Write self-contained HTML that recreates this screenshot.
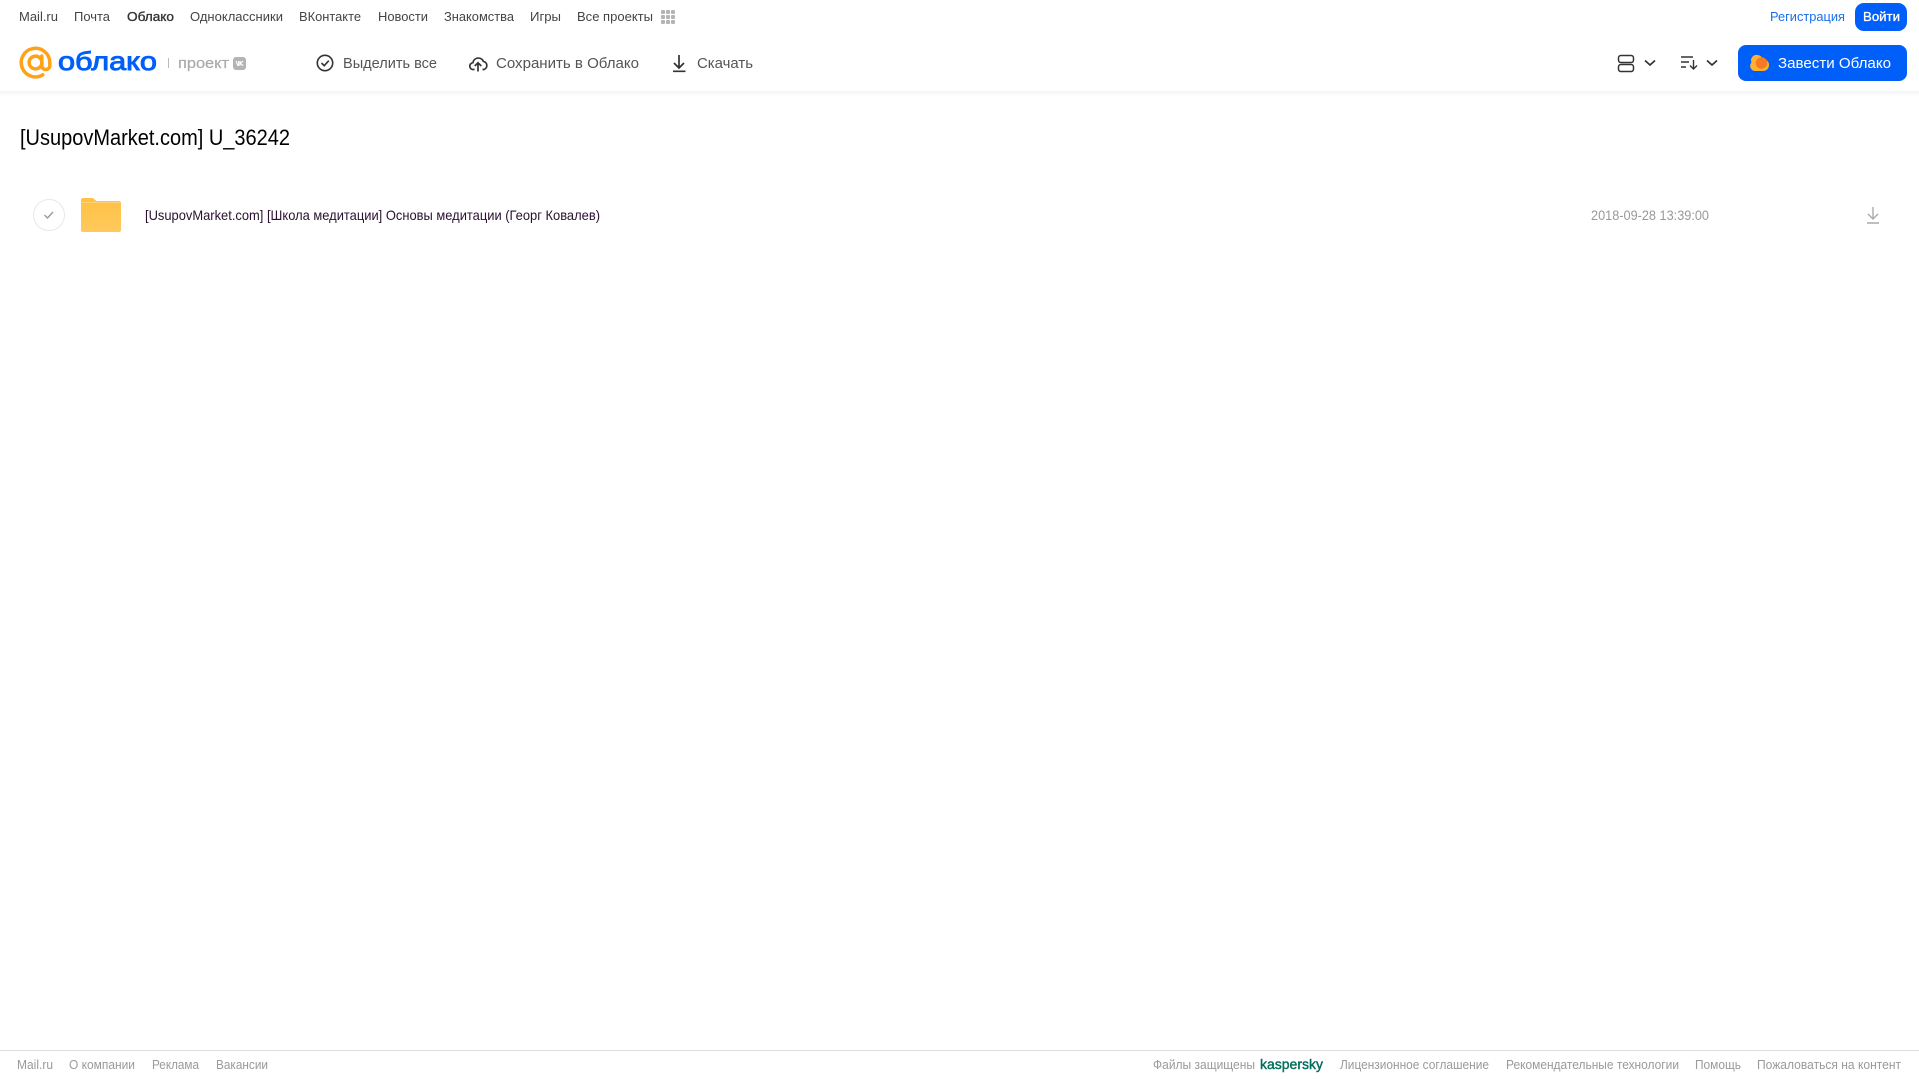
<!DOCTYPE html>
<html lang="ru">
<head>
<meta charset="utf-8">
<title>[UsupovMarket.com] U_36242</title>
<style>
html,body{margin:0;padding:0;background:#fff;width:1919px;height:1079px;overflow:hidden}
svg{display:block}
text{font-family:"Liberation Sans",sans-serif}
</style>
</head>
<body>
<svg xmlns="http://www.w3.org/2000/svg" width="1919" height="1079" viewBox="0 0 1919 1079">
<defs>
<linearGradient id="sh" x1="0" y1="0" x2="0" y2="1"><stop offset="0" stop-color="#f3f3f3"/><stop offset="1" stop-color="#fff"/></linearGradient>
<linearGradient id="fo" x1="0" y1="0" x2="0" y2="1"><stop offset="0" stop-color="#ffc145"/><stop offset="1" stop-color="#ffc95c"/></linearGradient>
</defs>
<rect width="1919" height="1079" fill="#fff"/>
<rect x="0" y="91" width="1919" height="5" fill="url(#sh)"/>

<!-- top nav -->
<g font-size="13" fill="#444">
<text x="19" y="21" textLength="39" lengthAdjust="spacingAndGlyphs">Mail.ru</text>
<text x="74" y="21" textLength="36" lengthAdjust="spacingAndGlyphs">Почта</text>
<text x="127" y="21" textLength="47" lengthAdjust="spacingAndGlyphs" fill="#333" stroke="#333" stroke-width=".35">Облако</text>
<text x="190" y="21" textLength="93" lengthAdjust="spacingAndGlyphs">Одноклассники</text>
<text x="299" y="21" textLength="62" lengthAdjust="spacingAndGlyphs">ВКонтакте</text>
<text x="378" y="21" textLength="50" lengthAdjust="spacingAndGlyphs">Новости</text>
<text x="444" y="21" textLength="70" lengthAdjust="spacingAndGlyphs">Знакомства</text>
<text x="530" y="21" textLength="31" lengthAdjust="spacingAndGlyphs">Игры</text>
<text x="577" y="21" textLength="76" lengthAdjust="spacingAndGlyphs">Все проекты</text>
</g>
<g fill="#b4b4b4">
<rect x="661" y="10" width="4" height="4" rx="1"/><rect x="666" y="10" width="4" height="4" rx="1"/><rect x="671" y="10" width="4" height="4" rx="1"/>
<rect x="661" y="15" width="4" height="4" rx="1"/><rect x="666" y="15" width="4" height="4" rx="1"/><rect x="671" y="15" width="4" height="4" rx="1"/>
<rect x="661" y="20" width="4" height="4" rx="1"/><rect x="666" y="20" width="4" height="4" rx="1"/><rect x="671" y="20" width="4" height="4" rx="1"/>
</g>
<text x="1770" y="21" font-size="13" fill="#1a6fe8" textLength="75" lengthAdjust="spacingAndGlyphs">Регистрация</text>
<rect x="1855" y="3" width="52" height="28" rx="9" fill="#005ff9"/>
<text x="1863" y="21" font-size="13" fill="#fff" stroke="#fff" stroke-width=".3" textLength="37" lengthAdjust="spacingAndGlyphs">Войти</text>

<!-- logo -->
<circle cx="35.500" cy="62.500" r="6.400" fill="none" stroke="#ffa217" stroke-width="3.500"/>
<path d="M41.800 56 V65.500 a4 4 0 0 0 8 0 V62.500 a14.300 14.300 0 1 0 -7 12.400" fill="none" stroke="#ffa217" stroke-width="3.500" stroke-linecap="round"/>
<text x="58" y="70" font-size="26" fill="#005ff9" stroke="#005ff9" stroke-width=".9" textLength="99" lengthAdjust="spacingAndGlyphs">облако</text>
<rect x="168" y="58" width="1" height="10" fill="#bbb"/>
<text x="178" y="68" font-size="15" fill="#aaa" stroke="#aaa" stroke-width=".2" textLength="51" lengthAdjust="spacingAndGlyphs">проект</text>
<rect x="233" y="57" width="13" height="13" rx="3" fill="#b4b4b4"/>
<path d="M236 61 l1.800 4.500 h.8 v-4.500 M243 61 l-2.600 2.200 2.800 2.600 M240 61 v4.500" fill="none" stroke="#fff" stroke-width="1.100"/>

<!-- toolbar -->
<circle cx="325" cy="63" r="7.700" fill="none" stroke="#333" stroke-width="1.600"/>
<path d="M321.500 63 l2.700 2.700 4.600-5" fill="none" stroke="#333" stroke-width="1.600"/>
<g font-size="15" fill="#555">
<text x="343" y="68" textLength="94" lengthAdjust="spacingAndGlyphs">Выделить все</text>
<text x="496" y="68" textLength="143" lengthAdjust="spacingAndGlyphs">Сохранить в Облако</text>
<text x="697" y="68" textLength="56" lengthAdjust="spacingAndGlyphs">Скачать</text>
</g>
<path d="M474.500 69.500 h-1 a3.400 3.400 0 0 1 -.6-6.800 a5.500 5.500 0 0 1 10.500-1.300 a4.200 4.200 0 0 1 .6 8.100 h-1.500 M478 71.500 V63 M474.700 66 L478 62.800 L481.300 66" fill="none" stroke="#333" stroke-width="1.700"/>
<path d="M679 55 V68 M674 63 L679 68 L684 63 M673 71.300 H685.500" fill="none" stroke="#333" stroke-width="1.700"/>

<!-- right controls -->
<rect x="1618.500" y="55.500" width="15" height="7" rx="2.400" fill="none" stroke="#333" stroke-width="1.500"/>
<rect x="1618.500" y="64.500" width="15" height="7" rx="2.400" fill="none" stroke="#333" stroke-width="1.500"/>
<path d="M1645 60.500 L1650 65 L1655 60.500" fill="none" stroke="#333" stroke-width="1.700"/>
<path d="M1681 57 H1693 M1681 62 H1689 M1681 67 H1686 M1693.500 60 V69 M1690 65.500 L1693.500 69 L1697 65.500" fill="none" stroke="#333" stroke-width="1.400"/>
<path d="M1707 60.500 L1712 65 L1717 60.500" fill="none" stroke="#333" stroke-width="1.700"/>
<rect x="1738" y="45" width="169" height="36" rx="8" fill="#005ff9"/>
<path d="M1755 71 a5 5 0 0 1 -3.500 -8.400 a5.500 5.500 0 0 1 6 -7.600 a5.500 5.500 0 0 1 5 4 a6 6 0 0 1 1 12 z" fill="#ffb12e"/>
<circle cx="1761.500" cy="63" r="5.800" fill="#f57a22"/>
<text x="1778" y="68" font-size="15" fill="#fff" textLength="113" lengthAdjust="spacingAndGlyphs">Завести Облако</text>

<!-- title -->
<text x="20" y="145" font-size="22" fill="#000" textLength="270" lengthAdjust="spacingAndGlyphs">[UsupovMarket.com] U_36242</text>

<!-- row -->
<circle cx="49" cy="215" r="15.500" fill="#fff" stroke="#e8e8e8" stroke-width="1"/>
<path d="M44.500 215 l3 3 5.500-6" fill="none" stroke="#999" stroke-width="1.400"/>
<path d="M81 200 a2 2 0 0 1 2-2 h9 c2.500 0 3 3 5 3 h22 a2 2 0 0 1 2 2 v27 a2 2 0 0 1-2 2 h-36 a2 2 0 0 1-2-2 z" fill="url(#fo)"/>
<rect x="81" y="202" width="40" height="1" fill="#ffd27a"/>
<text x="145" y="220" font-size="14" fill="#2a1030" textLength="455" lengthAdjust="spacingAndGlyphs">[UsupovMarket.com] [Школа медитации] Основы медитации (Георг Ковалев)</text>
<text x="1591" y="220" font-size="14" fill="#999" textLength="118" lengthAdjust="spacingAndGlyphs">2018-09-28 13:39:00</text>
<path d="M1873 207 V219 M1868 214 L1873 219 L1878 214 M1867 223 H1879" fill="none" stroke="#aaa" stroke-width="1.400"/>

<!-- footer -->
<rect x="0" y="1050" width="1919" height="1" fill="#ddd"/>
<g font-size="13" fill="#9a9a9a">
<text x="17" y="1069" textLength="36" lengthAdjust="spacingAndGlyphs">Mail.ru</text>
<text x="69" y="1069" textLength="66" lengthAdjust="spacingAndGlyphs">О компании</text>
<text x="152" y="1069" textLength="47" lengthAdjust="spacingAndGlyphs">Реклама</text>
<text x="216" y="1069" textLength="52" lengthAdjust="spacingAndGlyphs">Вакансии</text>
<text x="1153" y="1069" textLength="102" lengthAdjust="spacingAndGlyphs">Файлы защищены</text>
<text x="1260" y="1069" font-size="14" fill="#006d5c" stroke="#006d5c" stroke-width=".4" textLength="63" lengthAdjust="spacingAndGlyphs">kaspersky</text>
<text x="1340" y="1069" textLength="149" lengthAdjust="spacingAndGlyphs">Лицензионное соглашение</text>
<text x="1506" y="1069" textLength="173" lengthAdjust="spacingAndGlyphs">Рекомендательные технологии</text>
<text x="1695" y="1069" textLength="46" lengthAdjust="spacingAndGlyphs">Помощь</text>
<text x="1757" y="1069" textLength="144" lengthAdjust="spacingAndGlyphs">Пожаловаться на контент</text>
</g>
</svg>
</body>
</html>
